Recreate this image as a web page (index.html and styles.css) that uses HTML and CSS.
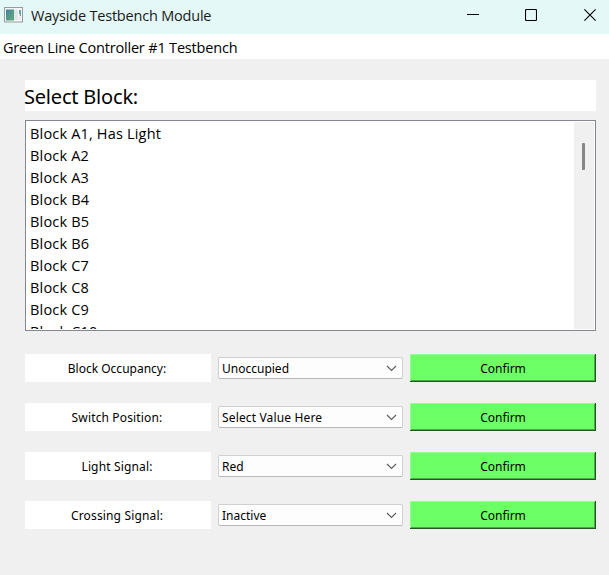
FILE: index.html
```html
<!DOCTYPE html>
<html lang="en">
<head>
<meta charset="utf-8">
<title>Wayside Testbench Module</title>
<link rel="stylesheet" href="styles.css">
</head>
<body>
<div class="window">
  <header class="titlebar">
    <svg class="app-icon" width="19" height="16" viewBox="0 0 19 16">
      <defs><linearGradient id="screen" x1="0" y1="0" x2="1" y2="1"><stop offset="0" stop-color="#4384a0"/><stop offset="1" stop-color="#61ad74"/></linearGradient></defs>
      <rect x=".5" y=".5" width="18" height="14.5" fill="#f5f6f7" stroke="#969ca0"/>
      <rect x="2" y="2.5" width="8" height="11" fill="url(#screen)"/>
      <rect x="10" y="3" width="4" height="10" fill="#dfe6ea"/>
      <path d="M15 3H17V9H16L15 6Z" fill="#62aaa0"/>
      <rect x="15" y="9" width="2" height="4" fill="#e8e9ee"/>
    </svg>
    <h1 class="title"><span>Wayside Testbench Module</span></h1>
    <div class="controls">
      <svg width="12" height="12" viewBox="0 0 12 12"><path d="M0 5.5H12" stroke="#000"/></svg>
      <svg width="12" height="12" viewBox="0 0 12 12"><rect x=".5" y=".5" width="11" height="11" rx="1" fill="none" stroke="#000" stroke-width="1.1"/></svg>
      <svg width="12" height="12" viewBox="0 0 12 12"><path d="M.4 .4L11.6 11.6M11.6 .4L.4 11.6" stroke="#000" stroke-width="1.1"/></svg>
    </div>
  </header>
  <div class="subtitle"><span>Green Line Controller #1 Testbench</span></div>
  <main class="content">
    <h2 class="heading"><span>Select Block:</span></h2>
    <div class="list">
      <ul class="items">
        <li><span>Block A1, Has Light</span></li>
        <li><span>Block A2</span></li>
        <li><span>Block A3</span></li>
        <li><span>Block B4</span></li>
        <li><span>Block B5</span></li>
        <li><span>Block B6</span></li>
        <li><span>Block C7</span></li>
        <li><span>Block C8</span></li>
        <li><span>Block C9</span></li>
        <li><span>Block C10</span></li>
      </ul>
      <div class="scrollbar"><div class="thumb"></div></div>
    </div>
    <div class="form">
      <div class="label">Block Occupancy:</div>
      <div class="select"><span>Unoccupied</span><svg width="11" height="7" viewBox="0 0 11 7"><path d="M1 1L5.5 5.5L10 1" fill="none" stroke="#5c5c5c" stroke-width="1.1"/></svg></div>
      <button class="confirm">Confirm</button>
      <div class="label wide">Switch Position:</div>
      <div class="select wide"><span>Select Value Here</span><svg width="11" height="7" viewBox="0 0 11 7"><path d="M1 1L5.5 5.5L10 1" fill="none" stroke="#5c5c5c" stroke-width="1.1"/></svg></div>
      <button class="confirm">Confirm</button>
      <div class="label wide">Light Signal:</div>
      <div class="select"><span>Red</span><svg width="11" height="7" viewBox="0 0 11 7"><path d="M1 1L5.5 5.5L10 1" fill="none" stroke="#5c5c5c" stroke-width="1.1"/></svg></div>
      <button class="confirm">Confirm</button>
      <div class="label wide">Crossing Signal:</div>
      <div class="select"><span>Inactive</span><svg width="11" height="7" viewBox="0 0 11 7"><path d="M1 1L5.5 5.5L10 1" fill="none" stroke="#5c5c5c" stroke-width="1.1"/></svg></div>
      <button class="confirm">Confirm</button>
    </div>
  </main>
</div>
</body>
</html>
```
FILE: styles.css
```css
* { box-sizing: border-box; }
body { margin: 0; }
.window {
  width: 609px;
  height: 575px;
  overflow: hidden;
  background: #f0f0f0;
  color: #000;
  font-family: "Open Sans", "Noto Sans", sans-serif;
}
.titlebar {
  display: flex;
  align-items: center;
  height: 34px;
  padding: 0 13px 4px 4px;
  background: #e3f8f7;
}
.app-icon { margin-right: 8px; }
.title { flex: 1; margin: 0; padding-top: 2px; font-size: 14.5px; font-weight: 400; line-height: 30px; color: #1a1a1a; letter-spacing: -0.2px; }
.controls { display: flex; gap: 47px; }
.controls svg { display: block; }
.controls svg:first-child { margin-right: -1px; }
.subtitle {
  height: 25px;
  padding-left: 3px;
  background: #fff;
  font-size: 14.5px;
  line-height: 27px;
  letter-spacing: -0.18px;
}
.content { padding: 21px 13px 0 25px; }
.heading {
  height: 31px;
  margin: 0 0 9px;
  background: #fff;
  font: 400 20px/33px "Noto Sans", sans-serif;
  letter-spacing: -0.2px;
}
.heading span { margin-left: -1px; }
.list {
  display: flex;
  height: 211px;
  padding: 1px;
  border: 1px solid #828790;
  background: #fff;
  overflow: hidden;
}
.items {
  flex: 1;
  height: 207px;
  margin: 0;
  padding: 1px 0 0 3px;
  overflow: hidden;
  list-style: none;
  font-size: 14.5px;
  line-height: 22px;
  letter-spacing: 0.18px;
}
.items li { height: 22px; }
.scrollbar { width: 20px; padding: 21px 0 0 8px; background: #f0f0f0; }
.thumb { width: 3px; height: 27px; border-radius: 1px; background: #868686; }
.form {
  display: grid;
  grid-template-columns: 186px 185px 186px;
  column-gap: 7px;
  row-gap: 21px;
  align-items: center;
  margin-top: 23px;
  font: 12px/28px "Noto Sans", sans-serif;
}
.label { height: 28px; padding-right: 2px; background: #fff; text-align: center; line-height: 29px; }
.wide { letter-spacing: 0.15px; }
.select {
  display: flex;
  align-items: center;
  justify-content: space-between;
  height: 22px;
  padding: 0 5px 0 3px;
  border: 1px solid #d0d0d0;
  border-bottom-color: #b8b8b8;
  border-radius: 2px;
  background: #fdfdfd;
  line-height: 20px;
}
.select span { padding-top: 1px; }
.confirm {
  height: 28px;
  padding: 0;
  border: 0;
  background: #6cff66;
  box-shadow: inset -1px -1px #245522, inset 1px 1px #90ff8c, inset -2px -2px #48aa44;
  color: #000;
  font: 12px/29px "Noto Sans", sans-serif;
}
```
